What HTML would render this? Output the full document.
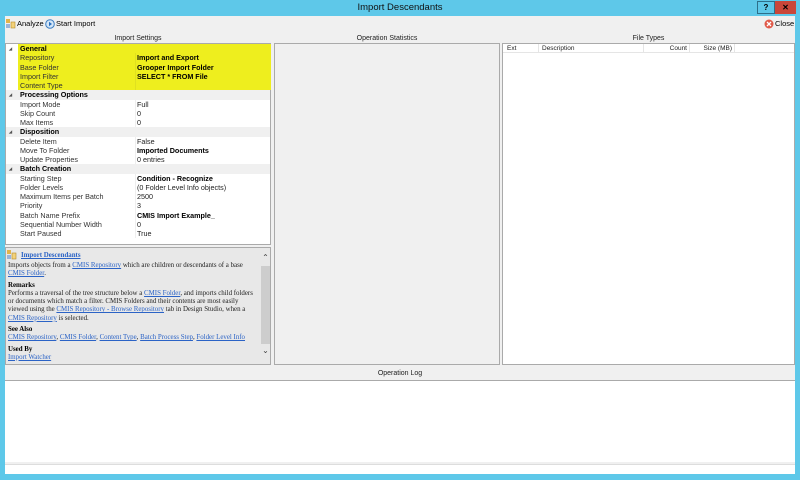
<!DOCTYPE html>
<html><head><meta charset="utf-8"><style>
*{box-sizing:border-box;margin:0;padding:0}
body{width:800px;height:480px;overflow:hidden;background:#5ec8e9;font-family:"Liberation Sans",sans-serif;font-size:7px;color:#000;position:relative}
.abs{position:absolute}
.title{left:0;top:0;width:800px;height:16px;text-align:center;font-size:9.5px;line-height:16px;color:#111}
.client{left:5px;top:16px;width:790px;height:458px;background:#f0f0f0}
.lbl{font-size:7px;color:#222;text-align:center}
.grid{left:5px;top:43px;width:266px;height:202px;background:#fff;border:1px solid #aaa}
.row{position:absolute;left:0;width:264px;height:9.25px;line-height:9.25px;font-size:7.2px}
.row .n{position:absolute;top:0;left:12px;width:118px;padding-left:2px;border-right:1px solid #eee;height:9.25px;line-height:9.25px;color:#333}
.row .v{position:absolute;top:0;left:131px;height:9.25px;line-height:9.25px;color:#222}
.row.h{background:#f0f0f0;font-weight:bold}
.row.h .n{left:0;padding-left:14px;border:none;color:#000;width:260px}
.row.h .n:before{content:"◢";position:absolute;left:3px;font-size:4px;color:#555}
.row .v.b{font-weight:bold;color:#000}
.help{left:5px;top:247px;width:266px;height:118px;background:#e8e8e8;border:1px solid #aaa;font-family:"Liberation Serif",serif;font-size:6.9px;line-height:8.3px;padding:3px 12px 0 2px;color:#222}
.help a{color:#2b63c6;text-decoration:underline}
.help b{color:#000}
.panel{border:1px solid #aaa}
</style></head><body>
<div class="abs title">Import Descendants</div>
<div class="abs" style="left:757px;top:1px;width:18px;height:13px;border:1px solid #2d6f8a;background:#5ec8e9;font-size:8px;font-weight:bold;text-align:center;line-height:11px">?</div>
<div class="abs" style="left:775px;top:1px;width:21px;height:13px;background:#c9473a;color:#000;font-size:8px;font-weight:bold;text-align:center;line-height:13px">✕</div>
<div class="abs client"></div>
<svg class="abs" style="left:6px;top:19px" width="10" height="10"><rect x="0" y="0" width="4" height="4" fill="#e2b34a"/><rect x="5" y="3" width="4" height="6" fill="#f3d27a" stroke="#b58a2a" stroke-width=".6"/><rect x="0" y="5" width="4" height="4" fill="#9ab4d8"/></svg>
<div class="abs" style="left:17px;top:19px;font-size:7.5px">Analyze</div>
<svg class="abs" style="left:45px;top:19px" width="10" height="10"><circle cx="5" cy="5" r="4.3" fill="#d4e6f7" stroke="#3a7cc2" stroke-width="1"/><path d="M4 2.8L7 5L4 7.2Z" fill="#2a6fc0"/></svg>
<div class="abs" style="left:56px;top:19px;font-size:7.5px">Start Import</div>
<svg class="abs" style="left:764px;top:19px" width="10" height="10"><circle cx="5" cy="5" r="4.5" fill="#e05a4a"/><path d="M3 3L7 7M7 3L3 7" stroke="#fff" stroke-width="1.3"/></svg>
<div class="abs" style="left:775px;top:19px;font-size:7.5px">Close</div>
<div class="abs lbl" style="left:5px;top:35px;width:266px">Import Settings</div>
<div class="abs lbl" style="left:274px;top:35px;width:226px">Operation Statistics</div>
<div class="abs lbl" style="left:502px;top:35px;width:293px">File Types</div>
<div class="abs grid">
<div class="abs" style="left:12px;top:0;width:253px;height:46px;background:#eeee1e"></div>
<div class="row h" style="top:0;background:transparent"><span class="n">General</span></div>
<div class="row" style="top:9.25px"><span class="n" style="border-color:#e0e020">Repository</span><span class="v b">Import and Export</span></div>
<div class="row" style="top:18.5px"><span class="n" style="border-color:#e0e020">Base Folder</span><span class="v b">Grooper Import Folder</span></div>
<div class="row" style="top:27.75px"><span class="n" style="border-color:#e0e020">Import Filter</span><span class="v b">SELECT * FROM File</span></div>
<div class="row" style="top:37px"><span class="n" style="border-color:#e0e020">Content Type</span></div>
<div class="row h" style="top:46.25px"><span class="n">Processing Options</span></div>
<div class="row" style="top:55.5px"><span class="n">Import Mode</span><span class="v">Full</span></div>
<div class="row" style="top:64.75px"><span class="n">Skip Count</span><span class="v">0</span></div>
<div class="row" style="top:74px"><span class="n">Max Items</span><span class="v">0</span></div>
<div class="row h" style="top:83.25px"><span class="n">Disposition</span></div>
<div class="row" style="top:92.5px"><span class="n">Delete Item</span><span class="v">False</span></div>
<div class="row" style="top:101.75px"><span class="n">Move To Folder</span><span class="v b">Imported Documents</span></div>
<div class="row" style="top:111px"><span class="n">Update Properties</span><span class="v">0 entries</span></div>
<div class="row h" style="top:120.25px"><span class="n">Batch Creation</span></div>
<div class="row" style="top:129.5px"><span class="n">Starting Step</span><span class="v b">Condition - Recognize</span></div>
<div class="row" style="top:138.75px"><span class="n">Folder Levels</span><span class="v">(0 Folder Level Info objects)</span></div>
<div class="row" style="top:148px"><span class="n">Maximum Items per Batch</span><span class="v">2500</span></div>
<div class="row" style="top:157.25px"><span class="n">Priority</span><span class="v">3</span></div>
<div class="row" style="top:166.5px"><span class="n">Batch Name Prefix</span><span class="v b">CMIS Import Example_</span></div>
<div class="row" style="top:175.75px"><span class="n">Sequential Number Width</span><span class="v">0</span></div>
<div class="row" style="top:185px"><span class="n">Start Paused</span><span class="v">True</span></div>
</div>
<div class="abs help">
<div style="height:11px;padding-left:13px;line-height:10px"><a style="font-weight:bold">Import Descendants</a></div>
<div>Imports objects from a <a>CMIS Repository</a> which are children or descendants of a base <a>CMIS Folder</a>.</div>
<div style="margin-top:3px"><b>Remarks</b></div>
<div>Performs a traversal of the tree structure below a <a>CMIS Folder</a>, and imports child folders or documents which match a filter. CMIS Folders and their contents are most easily viewed using the <a>CMIS Repository - Browse Repository</a> tab in Design Studio, when a <a>CMIS Repository</a> is selected.</div>
<div style="margin-top:3px"><b>See Also</b></div>
<div><a>CMIS Repository</a>, <a>CMIS Folder</a>, <a>Content Type</a>, <a>Batch Process Step</a>, <a>Folder Level Info</a></div>
<div style="margin-top:3px"><b>Used By</b></div>
<div><a>Import Watcher</a></div>
</div>
<svg class="abs" style="left:7px;top:250px" width="10" height="10"><rect x="0" y="0" width="4" height="4" fill="#e2b34a"/><rect x="5" y="3" width="4" height="6" fill="#f3d27a" stroke="#b58a2a" stroke-width=".6"/><rect x="0" y="5" width="4" height="4" fill="#9ab4d8"/></svg>
<div class="abs" style="left:261px;top:266px;width:9px;height:78px;background:#cdcdcd"></div>
<div class="abs" style="left:261px;top:253px;width:9px;font-size:8px;color:#444;text-align:center">⌃</div>
<div class="abs" style="left:261px;top:346px;width:9px;font-size:8px;color:#444;text-align:center">⌄</div>
<div class="abs panel" style="left:274px;top:43px;width:226px;height:322px;background:#f0f0f0"></div>
<div class="abs panel" style="left:502px;top:43px;width:293px;height:322px;background:#fff"></div>
<div class="abs" style="left:503px;top:44px;width:291px;height:9px;border-bottom:1px solid #e5e5e5;font-size:6.5px;line-height:9px;color:#222">
<span class="abs" style="left:4px">Ext</span>
<span class="abs" style="left:35px;top:0;height:9px;border-left:1px solid #e5e5e5;padding-left:3px">Description</span>
<span class="abs" style="left:140px;top:0;width:46px;height:9px;border-left:1px solid #e5e5e5;text-align:right;padding-right:2px">Count</span>
<span class="abs" style="left:186px;top:0;width:46px;height:9px;border-left:1px solid #e5e5e5;border-right:1px solid #e5e5e5;text-align:right;padding-right:2px">Size (MB)</span>
</div>
<div class="abs lbl" style="left:5px;top:370px;width:790px">Operation Log</div>
<div class="abs" style="left:5px;top:380px;width:790px;height:82px;background:#fff;border-top:1px solid #aaa"></div>
<div class="abs" style="left:5px;top:464px;width:790px;height:10px;background:#fff;border-top:1px solid #ddd"></div>
</body></html>
